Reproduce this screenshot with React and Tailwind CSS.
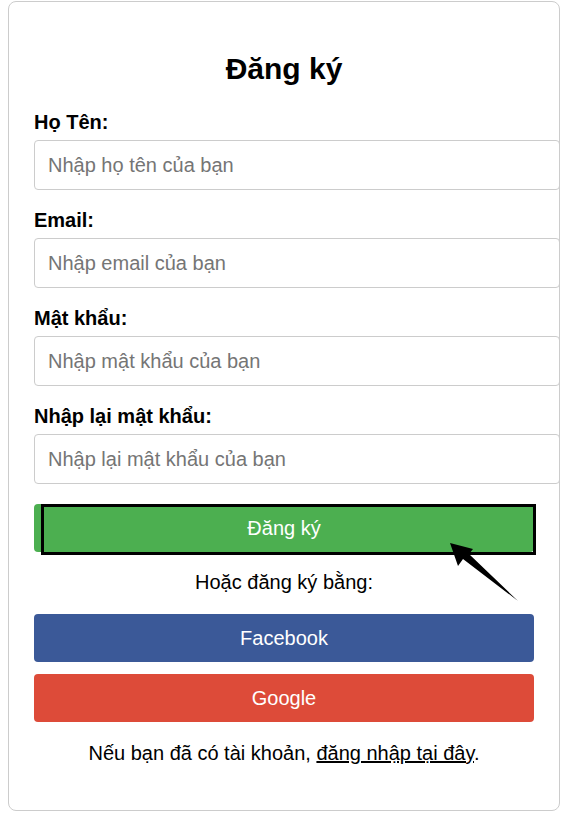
const fields = [
  { label: "Họ Tên:", placeholder: "Nhập họ tên của bạn", type: "text" },
  { label: "Email:", placeholder: "Nhập email của bạn", type: "email" },
  { label: "Mật khẩu:", placeholder: "Nhập mật khẩu của bạn", type: "password" },
  { label: "Nhập lại mật khẩu:", placeholder: "Nhập lại mật khẩu của bạn", type: "password" },
];

export default function App() {
  return (
    <div className="min-h-[814px] bg-white font-['Liberation_Sans',Arial,sans-serif] text-black">
      <div className="ml-[8px] mt-[1px] w-[552px] h-[810px] border border-[#ccc] rounded-[8px] px-[25px]">
        <h2 className="pt-[50px] text-center text-[30px] leading-[34px] font-bold">Đăng ký</h2>

        <form className="mt-[25px]" onSubmit={(e) => e.preventDefault()}>
          {fields.map((f) => (
            <div key={f.label} className="mb-[19px]">
              <label className="block text-[20px] leading-[22px] font-bold mb-[7px]">{f.label}</label>
              <input
                type={f.type}
                placeholder={f.placeholder}
                className="block w-[526px] h-[50px] px-[13px] border border-[#ccc] rounded-[4px] text-[20px] placeholder:text-[#757575] outline-none"
              />
            </div>
          ))}

          {/* submit + highlight annotation */}
          <div className="relative mt-[20px]">
            <button className="w-[500px] h-[48px] rounded-[4px] bg-[#4CAF50] text-white text-[20px]">Đăng ký</button>
            <div className="absolute left-[7px] top-0 w-[495px] h-[51px] border-[3px] border-black pointer-events-none" />
            <svg className="absolute left-[410px] top-[30px] pointer-events-none" width="100" height="80" viewBox="0 0 100 80">
              <polygon points="6,9 29,15 25,20 74,67 19,25 14,32" fill="#000" />
            </svg>
          </div>
        </form>

        <p className="mt-[19px] text-center text-[20px] leading-[22px]">Hoặc đăng ký bằng:</p>

        <div className="mt-[21px] flex flex-col gap-[12px]">
          <button className="w-[500px] h-[48px] rounded-[4px] bg-[#3b5998] text-white text-[20px]">Facebook</button>
          <button className="w-[500px] h-[48px] rounded-[4px] bg-[#dd4b39] text-white text-[20px]">Google</button>
        </div>

        <p className="mt-[20px] text-center text-[20px] leading-[22px]">
          Nếu bạn đã có tài khoản, <a href="#" className="underline text-black">đăng nhập tại đây</a>.
        </p>
      </div>
    </div>
  );
}
